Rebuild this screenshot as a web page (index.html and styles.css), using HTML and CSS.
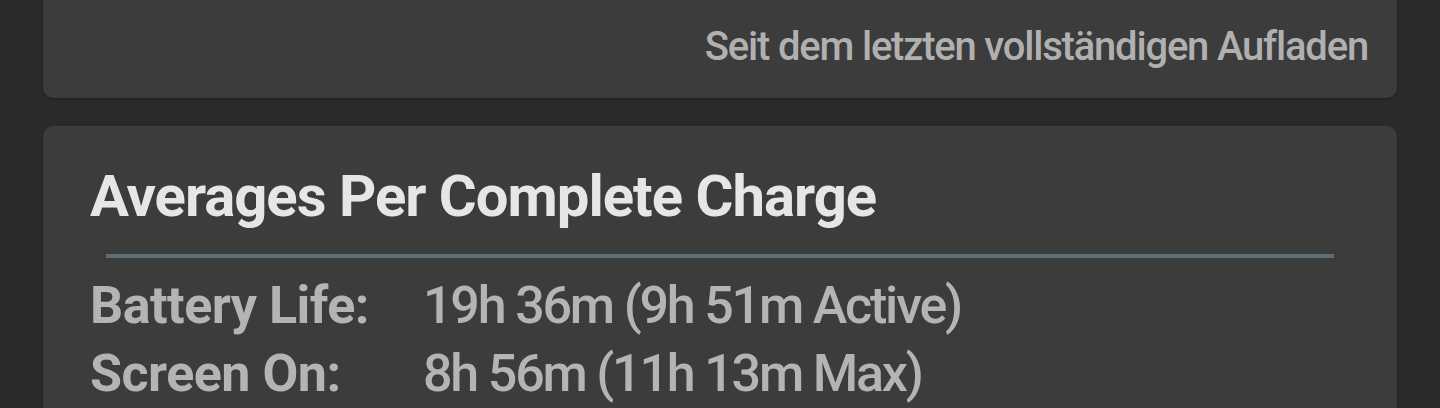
FILE: index.html
```html
<!DOCTYPE html>
<html lang="en">
<head>
    <meta charset="UTF-8">
    <meta name="viewport" content="width=device-width, initial-scale=1.0">
    <title>Battery Stats</title>
    <link rel="stylesheet" href="styles.css">
</head>
<body>
    <div class="page">
        <div class="card since-card">
            <p class="since">Seit dem letzten vollständigen Aufladen</p>
        </div>
        <div class="card averages">
            <h2 class="card-title">Averages Per Complete Charge</h2>
            <div class="divider"></div>
            <div class="stats">
                <span class="label">Battery Life:</span>
                <span class="value">19h 36m (9h 51m Active)</span>
                <span class="label">Screen On:</span>
                <span class="value">8h 56m (11h 13m Max)</span>
            </div>
        </div>
    </div>
</body>
</html>
```

FILE: styles.css
```css
* {
    margin: 0;
    padding: 0;
    box-sizing: border-box;
}
body {
    font-family: Roboto, "Noto Sans", Arial, sans-serif;
    background-color: #2a2a2a;
    color: #b4b4b4;
    overflow: hidden;
}
.page {
    display: flex;
    flex-direction: column;
    gap: 28px;
    padding: 0 43px;
    margin-top: -30px;
}
.card {
    background-color: #3c3c3c;
    border-radius: 10px;
    box-shadow: 0 1px 3px rgba(0, 0, 0, 0.25);
}
.since-card {
    display: flex;
    justify-content: flex-end;
    padding: 52px 29px 26px;
}
.since {
    font-size: 40px;
    line-height: 50px;
    font-weight: 500;
    color: #b0b0b0;
    letter-spacing: -1.2px;
}
.averages {
    padding: 30px 63px 40px 47px;
}
.card-title {
    font-size: 58px;
    line-height: 80px;
    font-weight: 700;
    color: #e6e6e6;
    letter-spacing: -1px;
}
.divider {
    height: 4px;
    background-color: #5e6e78;
    margin: 18px 0 14px 16px;
}
.stats {
    display: grid;
    grid-template-columns: 333px auto;
}
.label, .value {
    font-size: 52px;
    line-height: 68px;
}
.label {
    font-weight: 700;
    letter-spacing: -0.5px;
}
.value {
    font-weight: 500;
    letter-spacing: -2.2px;
}
```
